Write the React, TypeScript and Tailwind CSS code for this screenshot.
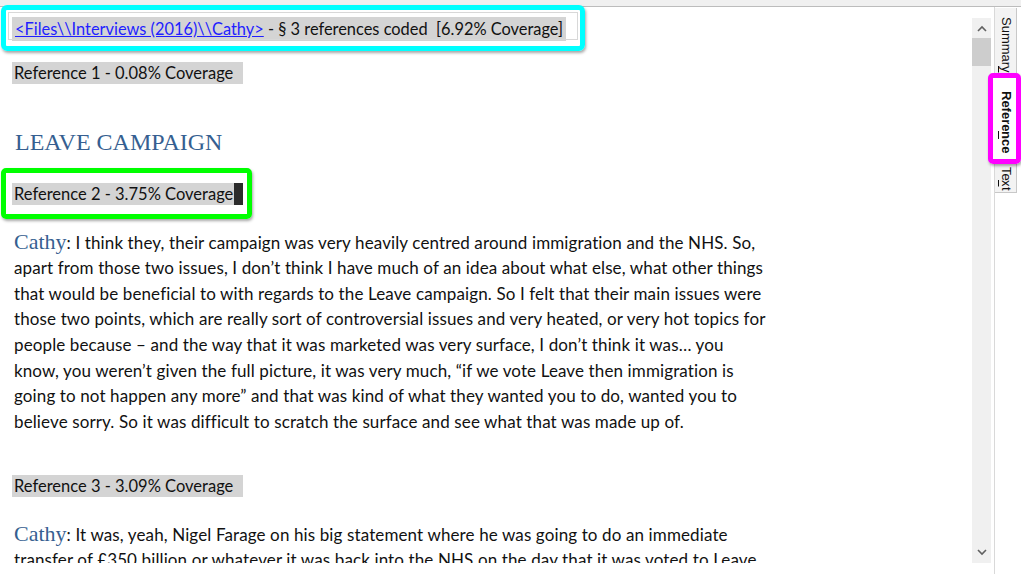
import React from 'react';

const lato = "font-['Lato','Liberation_Sans',sans-serif] text-[#111]";
const body = `${lato} text-[17px] tracking-[0.12px]`;
const serif = "font-['Liberation_Serif',serif] text-[#365f91]";

const para1 = [
  'apart from those two issues, I don’t think I have much of an idea about what else, what other things',
  'that would be beneficial to with regards to the Leave campaign. So I felt that their main issues were',
  'those two points, which are really sort of controversial issues and very heated, or very hot topics for',
  'people because – and the way that it was marketed was very surface, I don’t think it was… you',
  'know, you weren’t given the full picture, it was very much, “if we vote Leave then immigration is',
  'going to not happen any more” and that was kind of what they wanted you to do, wanted you to',
  'believe sorry. So it was difficult to scratch the surface and see what that was made up of.',
];

function RefLabel({ text, cursor }: { text: string; cursor?: boolean }) {
  return (
    <div className="flex">
      <div
        className={`${lato} relative h-[22px] w-[231px] bg-[#d4d4d4] pl-[2px] text-[16.5px] leading-[22px] whitespace-nowrap`}
      >
        {text}
        {cursor && <span className="absolute right-0 top-0 h-[22px] w-[9px] bg-[#2b2b2b]" />}
      </div>
    </div>
  );
}

function Speaker({ first }: { first: string }) {
  return (
    <div className="h-[26px] leading-[26px] whitespace-nowrap">
      <span className={`${serif} text-[22px]`}>Cathy</span>
      <span className={body}>: {first}</span>
    </div>
  );
}

function Chevron({ up }: { up?: boolean }) {
  return (
    <svg width="10" height="7" viewBox="0 0 10 7" className={up ? '' : 'rotate-180'}>
      <path d="M1 6 L5 2 L9 6" fill="none" stroke="#606060" strokeWidth="1.6" />
    </svg>
  );
}

export default function App() {
  return (
    <div className="relative h-[574px] w-[1021px] overflow-hidden bg-white">
      <div className="h-[7px] border-b border-[#bcbcbc] bg-[#f0f0f0]" />
      <div className="flex h-[567px]">
        <div className="h-[556px] w-[972px] overflow-hidden pl-[12px]">
          <div className="mt-[10px] flex">
            <div className={`${lato} h-[24px] w-[554px] bg-[#d4d4d4] pl-[3px] text-[16.4px] leading-[24px] whitespace-nowrap`}>
              <span className="text-[#1f1fff] underline">&lt;Files\\Interviews (2016)\\Cathy&gt;</span>
              {' - § 3 references coded\u00a0 [6.92% Coverage]'}
            </div>
          </div>
          <div className="mt-[21px]">
            <RefLabel text="Reference 1 - 0.08% Coverage" />
          </div>
          <div className={`${serif} mt-[42px] h-[32px] pl-[3px] text-[24px] leading-[32px]`}>
            LEAVE CAMPAIGN
          </div>
          <div className="mt-[25px]">
            <RefLabel text="Reference 2 - 3.75% Coverage" cursor />
          </div>
          <div className="mt-[24px] pl-[2px]">
            <Speaker first="I think they, their campaign was very heavily centred around immigration and the NHS. So," />
            {para1.map((line, i) => (
              <div key={i} className={`${body} h-[25.7px] leading-[25.7px] whitespace-nowrap`}>
                {line}
              </div>
            ))}
          </div>
          <div className="mt-[40px]">
            <RefLabel text="Reference 3 - 3.09% Coverage" />
          </div>
          <div className="mt-[24px] pl-[2px]">
            <Speaker first="It was, yeah, Nigel Farage on his big statement where he was going to do an immediate" />
            <div className={`${body} h-[26px] leading-[26px] whitespace-nowrap`}>
              transfer of £350 billion or whatever it was back into the NHS on the day that it was voted to Leave
            </div>
          </div>
        </div>

        <div className="mt-[11px] flex h-[545px] w-[19px] flex-col bg-[#f0f0f0]">
          <div className="flex h-[20px] items-center justify-center">
            <Chevron up />
          </div>
          <div className="h-[28px] bg-[#cdcdcd]" />
          <div className="flex-1" />
          <div className="flex h-[22px] items-center justify-center">
            <Chevron />
          </div>
        </div>

        <div className="ml-[3px] w-[1px] bg-[#d9d9d9]" />

        <div className="mt-[1px] flex h-[185px] w-[22px] flex-col border-r border-b border-[#c8c8c8] bg-[#f3f3f3] font-['Liberation_Sans',sans-serif] text-[13px] text-[#111]">
          <div className="flex h-[68px] justify-center pt-[6px] [writing-mode:vertical-rl]">
            Summar<u>y</u>
          </div>
          <div className="-ml-[3px] flex h-[86px] justify-center bg-white pt-[6px] font-bold [writing-mode:vertical-rl]">
            Refere<u>n</u>ce
          </div>
          <div className="flex flex-1 justify-center pt-[3px] [writing-mode:vertical-rl]">
            Te<u>x</u>t
          </div>
        </div>
      </div>

      {/* annotation outlines */}
      <div className="absolute left-[1px] top-[5px] h-[46px] w-[584px] rounded-[6px] border-[5px] border-[#00ffff] shadow-[1px_2px_3px_rgba(0,0,0,0.35)]">
        <div className="m-[2px] h-[28px] border border-[#d8d8d8]" />
      </div>
      <div className="absolute left-[1px] top-[168px] h-[51px] w-[251px] rounded-[5px] border-[5px] border-[#00ff00] shadow-[1px_2px_3px_rgba(0,0,0,0.35)]" />
      <div className="absolute left-[988px] top-[73px] h-[91px] w-[33px] rounded-[5px] border-[5px] border-[#ff00ff] shadow-[1px_2px_3px_rgba(0,0,0,0.35)]" />
    </div>
  );
}
